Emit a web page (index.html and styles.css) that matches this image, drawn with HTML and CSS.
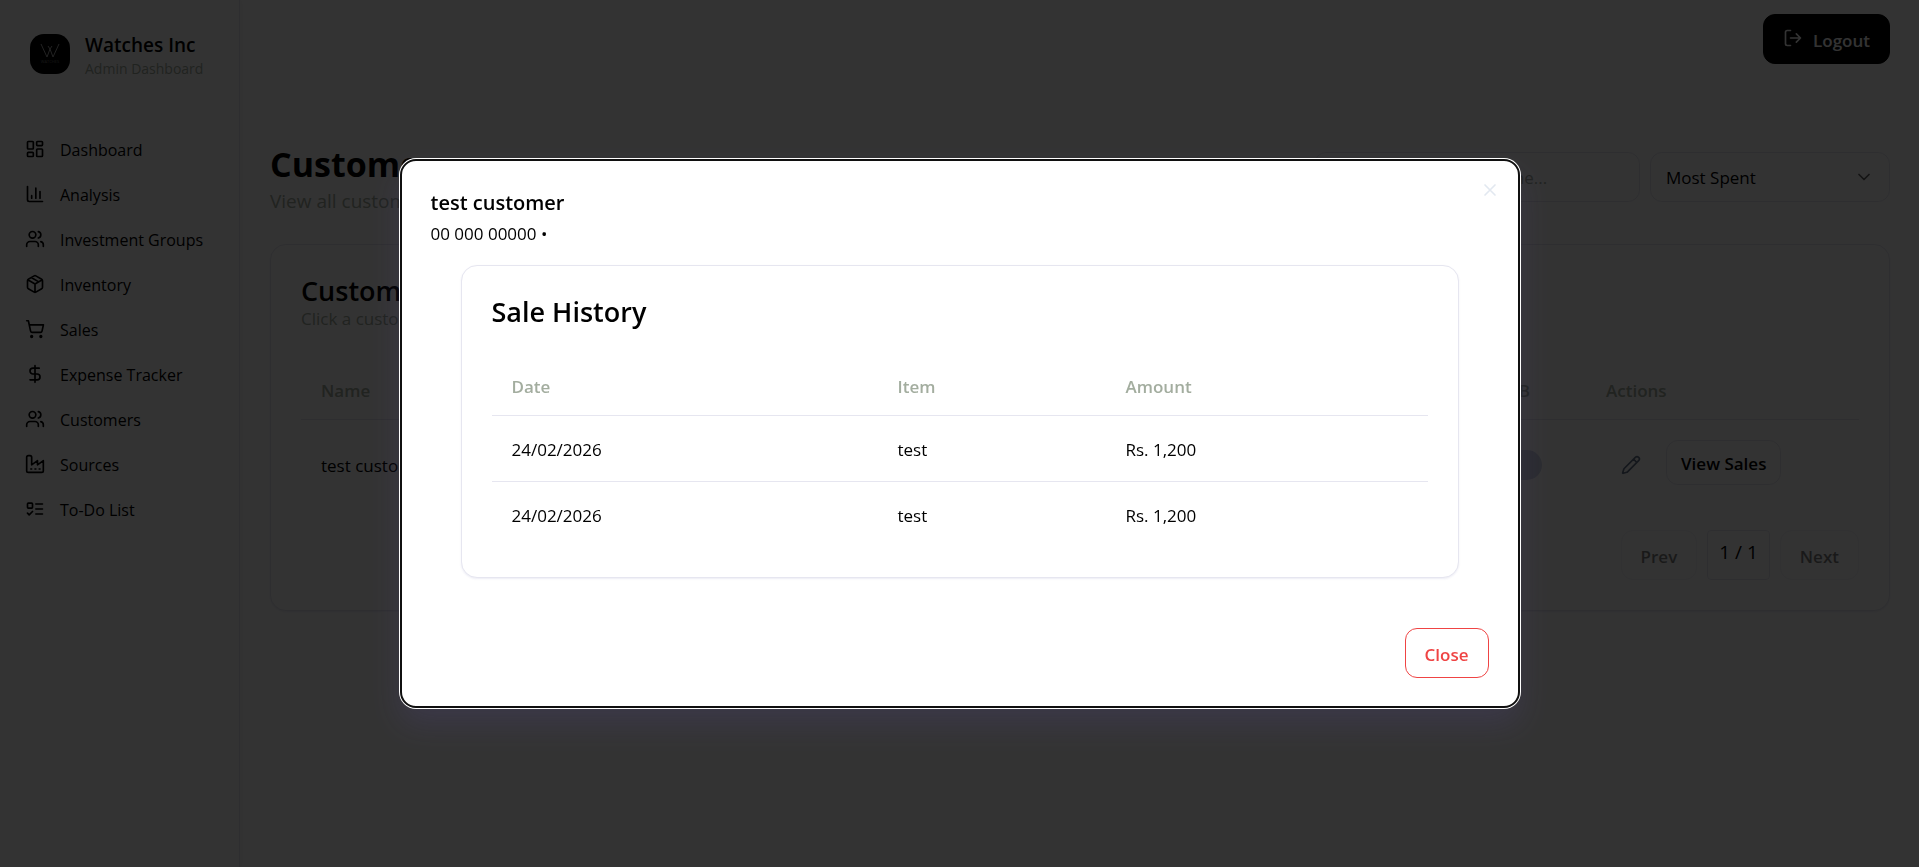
FILE: index.html
```html
<!DOCTYPE html>
<html lang="en">
    <head>
        <meta charset="UTF-8">
        <meta name="viewport" content="width=device-width, initial-scale=1.0">
        <title>Customers - Watches Inc</title>
        <link rel="stylesheet" href="styles.css">
    </head>
    <body>
        <div class="layout">
            <aside class="sidebar">
                <div class="brand">
                    <svg class="logo" viewBox="0 0 40 40">
                        <rect width="40" height="40" fill="#000"/>
                        <path d="M11 10l6 13 3-8 3 8 6-13M18 12l2 3 2-3" fill="none" stroke="#aaa"/>
                        <text x="20" y="29" font-size="4" text-anchor="middle" fill="#777">WATCHES</text>
                    </svg>
                    <div>
                        <div class="brand-name">Watches Inc</div>
                        <div class="brand-sub">Admin Dashboard</div>
                    </div>
                </div>
                <nav>
                    <a href="#"><svg class="icon" viewBox="0 0 24 24"><rect width="7" height="9" x="3" y="3" rx="1"/><rect width="7" height="5" x="14" y="3" rx="1"/><rect width="7" height="9" x="14" y="12" rx="1"/><rect width="7" height="5" x="3" y="16" rx="1"/></svg>Dashboard</a>
                    <a href="#"><svg class="icon" viewBox="0 0 24 24"><path d="M3 3v16a2 2 0 0 0 2 2h16M18 17V9M13 17V5M8 17v-3"/></svg>Analysis</a>
                    <a href="#"><svg class="icon" viewBox="0 0 24 24"><path d="M16 21v-2a4 4 0 0 0-4-4H6a4 4 0 0 0-4 4v2"/><circle cx="9" cy="7" r="4"/><path d="M22 21v-2a4 4 0 0 0-3-3.87M16 3.13a4 4 0 0 1 0 7.75"/></svg>Investment Groups</a>
                    <a href="#"><svg class="icon" viewBox="0 0 24 24"><path d="M11 21.73a2 2 0 0 0 2 0l7-4A2 2 0 0 0 21 16V8a2 2 0 0 0-1-1.73l-7-4a2 2 0 0 0-2 0l-7 4A2 2 0 0 0 3 8v8a2 2 0 0 0 1 1.73zM12 22V12M3.3 7l8.7 5 8.7-5M7.5 4.27l9 5.15"/></svg>Inventory</a>
                    <a href="#"><svg class="icon" viewBox="0 0 24 24"><circle cx="8" cy="21" r="1"/><circle cx="19" cy="21" r="1"/><path d="M2.05 2.05h2l2.66 12.42a2 2 0 0 0 2 1.58h9.78a2 2 0 0 0 1.95-1.57l1.65-7.43H5.12"/></svg>Sales</a>
                    <a href="#"><svg class="icon" viewBox="0 0 24 24"><path d="M12 2v20M17 5H9.5a3.5 3.5 0 0 0 0 7h5a3.5 3.5 0 0 1 0 7H6"/></svg>Expense Tracker</a>
                    <a href="#"><svg class="icon" viewBox="0 0 24 24"><path d="M16 21v-2a4 4 0 0 0-4-4H6a4 4 0 0 0-4 4v2"/><circle cx="9" cy="7" r="4"/><path d="M22 21v-2a4 4 0 0 0-3-3.87M16 3.13a4 4 0 0 1 0 7.75"/></svg>Customers</a>
                    <a href="#"><svg class="icon" viewBox="0 0 24 24"><path d="M2 20a2 2 0 0 0 2 2h16a2 2 0 0 0 2-2V8l-7 5V8l-7 5V4a2 2 0 0 0-2-2H4a2 2 0 0 0-2 2ZM17 18h1M12 18h1M7 18h1"/></svg>Sources</a>
                    <a href="#"><svg class="icon" viewBox="0 0 24 24"><rect x="3" y="5" width="6" height="6" rx="1"/><path d="M3 17l2 2 4-4M13 6h8M13 12h8M13 18h8"/></svg>To-Do List</a>
                </nav>
            </aside>
            <main>
                <header class="topbar">
                    <button class="btn btn-dark" type="button"><svg class="icon" viewBox="0 0 24 24"><path d="M9 21H5a2 2 0 0 1-2-2V5a2 2 0 0 1 2-2h4M16 17l5-5-5-5M21 12H9"/></svg>Logout</button>
                </header>
                <div class="page-head">
                    <div>
                        <h1>Customers</h1>
                        <p>View all customers and their purchases</p>
                    </div>
                    <div class="filters">
                        <input type="text" aria-label="Search" placeholder="Search by phone or name...">
                        <div class="select-wrap">
                            <select aria-label="Sort by">
                                <option>Most Spent</option>
                                <option>Least Spent</option>
                            </select>
                            <svg class="icon" viewBox="0 0 24 24"><path d="M6 9l6 6 6-6"/></svg>
                        </div>
                    </div>
                </div>
                <section class="card">
                    <h2>Customers</h2>
                    <p class="card-sub">Click a customer to view their sales</p>
                    <table class="customers">
                        <thead>
                            <tr><th>Name</th><th>Phone</th><th>Total Spent</th><th class="col-b2b">Is B2B</th><th class="col-actions">Actions</th></tr>
                        </thead>
                        <tbody>
                            <tr>
                                <td>test customer</td>
                                <td>00 000 00000</td>
                                <td>Rs. 2,400</td>
                                <td><span class="badge">No</span></td>
                                <td>
                                    <div class="actions">
                                        <button class="btn btn-icon" type="button" aria-label="Edit"><svg class="icon" viewBox="0 0 24 24"><path d="M21.17 6.81a1 1 0 0 0-3.98-3.98L3.84 16.17a2 2 0 0 0-.5.83l-1.32 4.35a.5.5 0 0 0 .62.62l4.35-1.32a2 2 0 0 0 .83-.5zM15 5l4 4"/></svg></button>
                                        <button class="btn btn-small" type="button">View Sales</button>
                                    </div>
                                </td>
                            </tr>
                        </tbody>
                    </table>
                    <div class="pager">
                        <button class="btn" type="button" disabled>Prev</button>
                        <span class="page-no">1 / 1</span>
                        <button class="btn" type="button" disabled>Next</button>
                    </div>
                </section>
            </main>
        </div>

        <div class="overlay">
            <div class="modal" role="dialog" aria-labelledby="modal-title">
                <button class="modal-x" type="button" aria-label="Close dialog"><svg class="icon" viewBox="0 0 24 24"><path d="M18 6L6 18M6 6l12 12"/></svg></button>
                <h2 id="modal-title">test customer</h2>
                <p class="modal-sub">00 000 00000 •</p>
                <section class="card modal-card">
                    <h2>Sale History</h2>
                    <table>
                        <thead>
                            <tr><th class="col-date">Date</th><th class="col-item">Item</th><th>Amount</th></tr>
                        </thead>
                        <tbody>
                            <tr><td>24/02/2026</td><td>test</td><td>Rs. 1,200</td></tr>
                            <tr><td>24/02/2026</td><td>test</td><td>Rs. 1,200</td></tr>
                        </tbody>
                    </table>
                </section>
                <div class="modal-footer">
                    <button class="btn btn-red" type="button">Close</button>
                </div>
            </div>
        </div>
    </body>
</html>
```
FILE: styles.css
```css
* {
    box-sizing: border-box;
}
body {
    margin: 0;
    font-family: "Segoe UI", "Open Sans", "Noto Sans", sans-serif;
    font-size: 17px;
    line-height: 25px;
    color: #000;
    background-color: #fff;
}
h1, h2, p {
    margin: 0;
}
h1 {
    font-size: 34px;
    line-height: 48px;
    font-weight: 700;
}
h2 {
    padding-top: 2px;
    font-size: 27px;
    line-height: 30px;
    font-weight: 600;
}
.icon {
    width: 20px;
    height: 20px;
    flex: none;
    fill: none;
    stroke: currentColor;
    stroke-width: 2;
    stroke-linecap: round;
    stroke-linejoin: round;
}

/* sidebar */
.layout {
    display: flex;
    min-height: 100vh;
}
.sidebar {
    width: 240px;
    flex: none;
    border-right: 1px solid #e6e6f0;
    box-shadow: 2px 0 4px rgba(0, 0, 0, 0.04);
}
.brand {
    display: flex;
    align-items: center;
    gap: 15px;
    padding: 29px 30px;
    margin-bottom: 20px;
    white-space: nowrap;
}
.logo {
    width: 40px;
    height: 40px;
    flex: none;
    border-radius: 14px;
}
.brand-name {
    padding-top: 2px;
    font-size: 19px;
    font-weight: 600;
    line-height: 28px;
}
.brand-sub {
    font-size: 14px;
    line-height: 20px;
    color: #a3ad9f;
}
nav a {
    display: flex;
    align-items: center;
    gap: 15px;
    padding: 10px 25px;
    color: #000;
    font-size: 16px;
    text-decoration: none;
    white-space: nowrap;
}
nav .icon, .btn-dark .icon {
    margin-bottom: 4px;
}

/* main area */
main {
    flex: 1;
    padding: 14px 29px 30px 30px;
}
.topbar {
    display: flex;
    justify-content: flex-end;
    margin-bottom: 76px;
}
.btn {
    display: inline-flex;
    align-items: center;
    justify-content: center;
    gap: 10px;
    height: 50px;
    padding: 2px 19px 0;
    border: 1px solid #e6e6f0;
    border-radius: 12px;
    background-color: #fff;
    color: #000;
    font: inherit;
    font-weight: 600;
    cursor: pointer;
}
.btn:disabled {
    opacity: 0.5;
}
.btn-dark {
    background-color: #000;
    border-color: #000;
    color: #fff;
}
.btn-small {
    height: 45px;
    padding: 2px 14px 0;
}
.btn-icon {
    width: 50px;
    padding: 0;
    border: none;
    color: #64748b;
}
.btn-red {
    border-color: #ef4444;
    color: #ef4444;
}
.page-head {
    display: flex;
    justify-content: space-between;
    align-items: center;
    margin-bottom: 30px;
}
.page-head p {
    font-size: 19px;
    line-height: 26px;
    color: #a3ad9f;
}
.filters {
    display: flex;
    gap: 10px;
}
.filters input, .filters select {
    height: 50px;
    border: 1px solid #e6e6f0;
    border-radius: 12px;
    padding: 0 15px;
    background-color: #fff;
    color: #000;
    font: inherit;
}
.filters input {
    width: 326px;
}
.filters input::placeholder {
    color: #a3ad9f;
}
.select-wrap {
    position: relative;
}
.filters select {
    width: 240px;
    appearance: none;
}
.select-wrap .icon {
    position: absolute;
    right: 16px;
    top: 15px;
    opacity: 0.6;
}
.card {
    padding: 29px 30px 30px;
    border: 1px solid #e6e6f0;
    border-radius: 16px;
    background-color: #fff;
    box-shadow: 0 1px 2px rgba(80, 80, 160, 0.1);
}
.card-sub {
    color: #a3ad9f;
}
table {
    width: 100%;
    margin-top: 29px;
    border-spacing: 0;
    table-layout: fixed;
}
th {
    height: 60px;
    padding: 2px 20px 0;
    border-bottom: 1px solid #e6e6f0;
    text-align: left;
    font-weight: 600;
    color: #a3ad9f;
}
td {
    padding: 20px;
    border-bottom: 1px solid #e6e6f0;
}
tr:last-child td {
    border-bottom: none;
}
.col-b2b {
    width: 126px;
}
.col-actions {
    width: 273px;
}
.badge {
    display: inline-block;
    padding: 2px 24px 3px 15px;
    border-radius: 15px;
    background-color: #d0d6e8;
}
.actions {
    display: flex;
    align-items: flex-start;
    gap: 10px;
}
.pager {
    display: flex;
    justify-content: flex-end;
    gap: 10px;
    margin-top: 20px;
}
.page-no {
    padding: 9px 11px;
    border: 1px solid #e6e6f0;
    border-radius: 4px;
    font-size: 19px;
}

/* sales dialog */
.overlay {
    position: fixed;
    inset: 0;
    display: flex;
    align-items: center;
    justify-content: center;
    background-color: rgba(0, 0, 0, 0.8);
}
.modal {
    position: relative;
    width: 90%;
    max-width: 1120px;
    padding: 30px 31px;
    border-radius: 16px;
    background-color: #fff;
    outline: 2px solid #101010;
    outline-offset: -2px;
    box-shadow: 0 0 0 1px #fff, 0 16px 30px rgba(91, 76, 156, 0.2);
}
.modal > h2 {
    padding-top: 1px;
    font-size: 20px;
    line-height: 25px;
}
.modal-sub {
    margin-top: 6px;
}
.modal-card {
    margin: 19px 30px 50px;
}
.modal-card td {
    padding: 21px 20px 19px;
}
.modal-x {
    position: absolute;
    top: 21px;
    right: 20px;
    width: 20px;
    height: 20px;
    padding: 0;
    border: none;
    background: none;
    color: #e2e8f0;
    cursor: pointer;
}
.col-date {
    width: 386px;
}
.col-item {
    width: 228px;
}
.modal-footer {
    display: flex;
    justify-content: flex-end;
}
```
